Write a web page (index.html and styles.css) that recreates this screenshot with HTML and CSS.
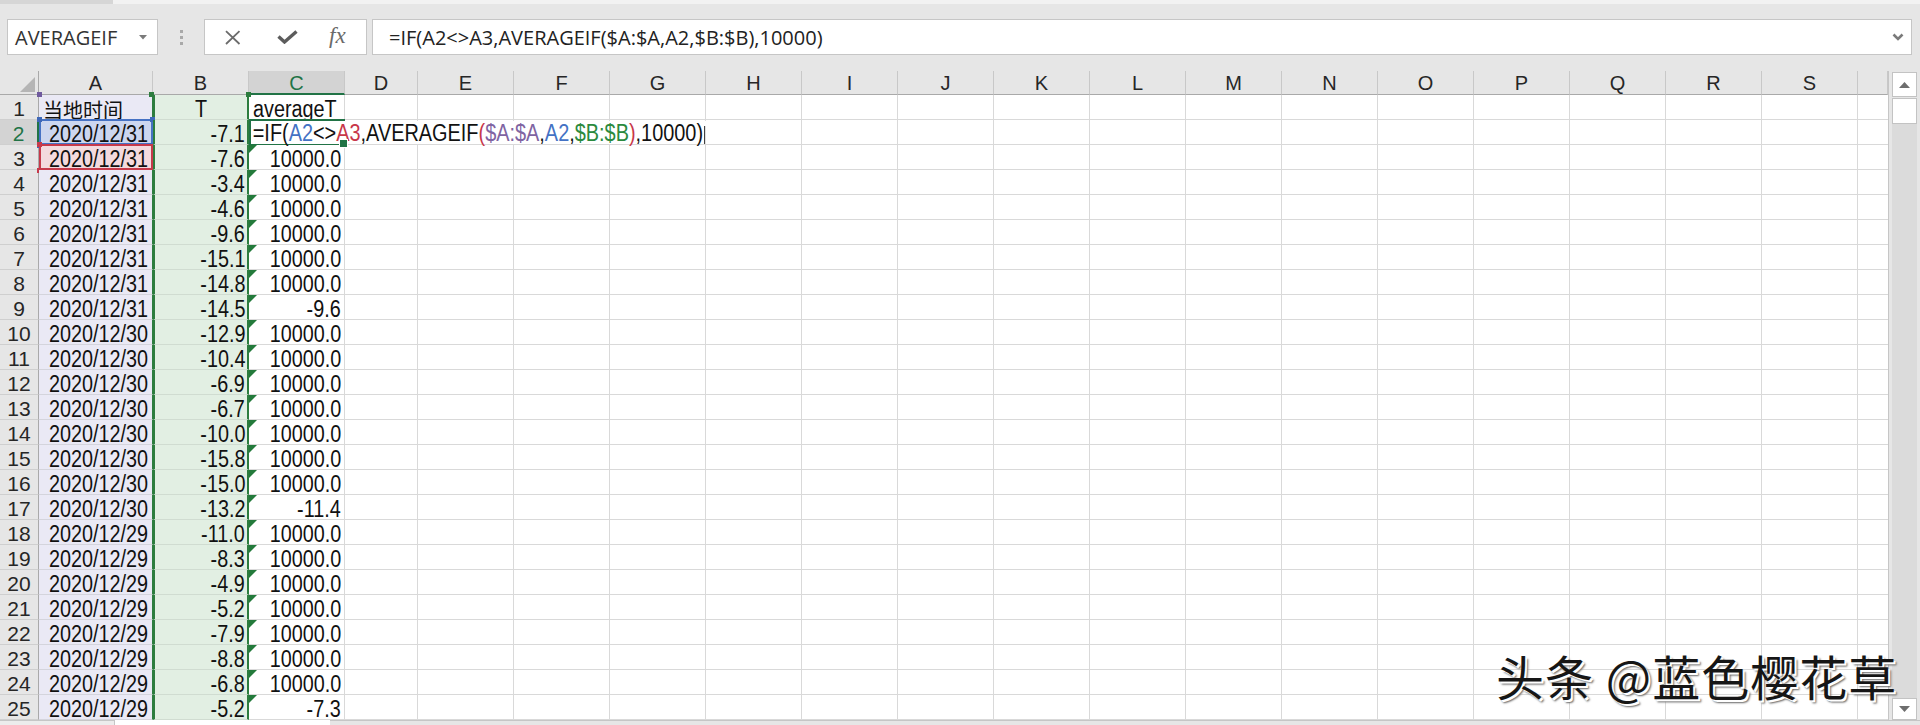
FILE: index.html
```html
<!DOCTYPE html>
<html lang="zh">
<head>
<meta charset="utf-8">
<title>Excel - AVERAGEIF</title>
<link rel="stylesheet" href="styles.css">
</head>
<body>
<div class="topstrip"><div class="ts-l"></div><div class="ts-r"></div></div>

<div class="toolbar">
  <div class="namebox">
    <span>AVERAGEIF</span>
    <svg class="caret" width="8" height="5" viewBox="0 0 8 5"><path d="M0 0H8L4 4.5Z" fill="#7a7a7a"/></svg>
  </div>
  <div class="sep"><i></i><i></i><i></i></div>
  <div class="fbtns">
    <svg class="ic-x" width="19" height="15" viewBox="0 0 19 15"><path d="M3 1.2L16.5 14M16.5 1.2L3 14" stroke="#6b6b6b" stroke-width="1.8" fill="none"/></svg>
    <svg class="ic-ok" width="21" height="14" viewBox="0 0 21 14"><path d="M1.5 6.5L7.5 12L19.5 1.5" stroke="#5c5c5c" stroke-width="3.4" fill="none"/></svg>
    <span class="fx">fx</span>
  </div>
  <div class="fbar">
    <span class="ftext">=IF(A2&lt;&gt;A3,AVERAGEIF($A:$A,A2,$B:$B),10000)</span>
    <svg class="chev" width="12" height="8" viewBox="0 0 12 8"><path d="M1.5 1.5L6 6L10.5 1.5" stroke="#7a7a7a" stroke-width="2.6" fill="none"/></svg>
  </div>
</div>

<div class="sheet">
  <div class="grid">
    <div class="h corner"></div>
    <div class="h">A</div><div class="h">B</div><div class="h sel">C</div><div class="h">D</div>
    <div class="h">E</div><div class="h">F</div><div class="h">G</div><div class="h">H</div>
    <div class="h">I</div><div class="h">J</div><div class="h">K</div><div class="h">L</div>
    <div class="h">M</div><div class="h">N</div><div class="h">O</div><div class="h">P</div>
    <div class="h">Q</div><div class="h">R</div><div class="h">S</div><div class="h"></div>

    <div class="blank"></div>

    <div class="rh">1</div>
    <div class="c a l first"><span class="cjk">当地时间</span></div>
    <div class="c b m"><span>T</span></div>
    <div class="c cc l"><span>averageT</span></div>

    <div class="rh sel">2</div>
    <div class="c a r ref-blue"><span>2020/12/31</span></div>
    <div class="c b r"><span>-7.1</span></div>
    <div class="c cc active">
      <div class="editor">=IF(<em class="k-blue">A2</em>&lt;&gt;<em class="k-red">A3</em>,AVERAGEIF<em class="k-red">(</em><em class="k-purple">$A:$A</em>,<em class="k-blue">A2</em>,<em class="k-green">$B:$B</em><em class="k-red">)</em>,10000)<i class="cursor"></i></div>
    </div>

    <div class="rh">3</div>
    <div class="c a r ref-red"><span>2020/12/31</span></div>
    <div class="c b r"><span>-7.6</span></div>
    <div class="c cc r tri"><span>10000.0</span></div>

    <div class="rh">4</div>
    <div class="c a r"><span>2020/12/31</span></div>
    <div class="c b r"><span>-3.4</span></div>
    <div class="c cc r tri"><span>10000.0</span></div>

    <div class="rh">5</div>
    <div class="c a r"><span>2020/12/31</span></div>
    <div class="c b r"><span>-4.6</span></div>
    <div class="c cc r tri"><span>10000.0</span></div>

    <div class="rh">6</div>
    <div class="c a r"><span>2020/12/31</span></div>
    <div class="c b r"><span>-9.6</span></div>
    <div class="c cc r tri"><span>10000.0</span></div>

    <div class="rh">7</div>
    <div class="c a r"><span>2020/12/31</span></div>
    <div class="c b r"><span>-15.1</span></div>
    <div class="c cc r tri"><span>10000.0</span></div>

    <div class="rh">8</div>
    <div class="c a r"><span>2020/12/31</span></div>
    <div class="c b r"><span>-14.8</span></div>
    <div class="c cc r tri"><span>10000.0</span></div>

    <div class="rh">9</div>
    <div class="c a r"><span>2020/12/31</span></div>
    <div class="c b r"><span>-14.5</span></div>
    <div class="c cc r tri"><span>-9.6</span></div>

    <div class="rh">10</div>
    <div class="c a r"><span>2020/12/30</span></div>
    <div class="c b r"><span>-12.9</span></div>
    <div class="c cc r tri"><span>10000.0</span></div>

    <div class="rh">11</div>
    <div class="c a r"><span>2020/12/30</span></div>
    <div class="c b r"><span>-10.4</span></div>
    <div class="c cc r tri"><span>10000.0</span></div>

    <div class="rh">12</div>
    <div class="c a r"><span>2020/12/30</span></div>
    <div class="c b r"><span>-6.9</span></div>
    <div class="c cc r tri"><span>10000.0</span></div>

    <div class="rh">13</div>
    <div class="c a r"><span>2020/12/30</span></div>
    <div class="c b r"><span>-6.7</span></div>
    <div class="c cc r tri"><span>10000.0</span></div>

    <div class="rh">14</div>
    <div class="c a r"><span>2020/12/30</span></div>
    <div class="c b r"><span>-10.0</span></div>
    <div class="c cc r tri"><span>10000.0</span></div>

    <div class="rh">15</div>
    <div class="c a r"><span>2020/12/30</span></div>
    <div class="c b r"><span>-15.8</span></div>
    <div class="c cc r tri"><span>10000.0</span></div>

    <div class="rh">16</div>
    <div class="c a r"><span>2020/12/30</span></div>
    <div class="c b r"><span>-15.0</span></div>
    <div class="c cc r tri"><span>10000.0</span></div>

    <div class="rh">17</div>
    <div class="c a r"><span>2020/12/30</span></div>
    <div class="c b r"><span>-13.2</span></div>
    <div class="c cc r tri"><span>-11.4</span></div>

    <div class="rh">18</div>
    <div class="c a r"><span>2020/12/29</span></div>
    <div class="c b r"><span>-11.0</span></div>
    <div class="c cc r tri"><span>10000.0</span></div>

    <div class="rh">19</div>
    <div class="c a r"><span>2020/12/29</span></div>
    <div class="c b r"><span>-8.3</span></div>
    <div class="c cc r tri"><span>10000.0</span></div>

    <div class="rh">20</div>
    <div class="c a r"><span>2020/12/29</span></div>
    <div class="c b r"><span>-4.9</span></div>
    <div class="c cc r tri"><span>10000.0</span></div>

    <div class="rh">21</div>
    <div class="c a r"><span>2020/12/29</span></div>
    <div class="c b r"><span>-5.2</span></div>
    <div class="c cc r tri"><span>10000.0</span></div>

    <div class="rh">22</div>
    <div class="c a r"><span>2020/12/29</span></div>
    <div class="c b r"><span>-7.9</span></div>
    <div class="c cc r tri"><span>10000.0</span></div>

    <div class="rh">23</div>
    <div class="c a r"><span>2020/12/29</span></div>
    <div class="c b r"><span>-8.8</span></div>
    <div class="c cc r tri"><span>10000.0</span></div>

    <div class="rh">24</div>
    <div class="c a r"><span>2020/12/29</span></div>
    <div class="c b r"><span>-6.8</span></div>
    <div class="c cc r tri"><span>10000.0</span></div>

    <div class="rh">25</div>
    <div class="c a r"><span>2020/12/29</span></div>
    <div class="c b r"><span>-5.2</span></div>
    <div class="c cc r tri"><span>-7.3</span></div>
  </div>

  <div class="vscroll">
    <div class="sb-btn up"><svg width="11" height="6" viewBox="0 0 11 6"><path d="M0 6H11L5.5 0Z" fill="#6e6e6e"/></svg></div>
    <div class="sb-thumb"></div>
    <div class="sb-track"></div>
    <div class="sb-btn down"><svg width="11" height="6" viewBox="0 0 11 6"><path d="M0 0H11L5.5 6Z" fill="#6e6e6e"/></svg></div>
  </div>
</div>

<div class="bottom"><div class="bt-1"></div><div class="bt-2"></div><div class="bt-3"></div></div>

<div class="wm">头条 @蓝色樱花草</div>
</body>
</html>
```

FILE: styles.css
```css
* { box-sizing: border-box; }

body {
  margin: 0;
  width: 1920px;
  height: 725px;
  overflow: hidden;
  position: relative;
  background: #e6e6e6;
  font-family: "Liberation Sans", Arial, sans-serif;
  color: #1a1a1a;
}

/* ---------- top strip ---------- */
.topstrip { display: flex; height: 4px; }
.ts-l { width: 113px; background: #d6d6d6; }
.ts-r { flex: 1; background: #f2f2f2; }

/* ---------- formula toolbar ---------- */
.toolbar {
  display: flex;
  height: 36px;
  margin: 15px 8px 16px 7px;
}
.namebox {
  width: 151px;
  background: #fff;
  border: 1px solid #c6c6c6;
  display: flex;
  align-items: center;
  justify-content: space-between;
  padding: 0 10px 0 7px;
  font-family: "Open Sans", "Noto Sans", sans-serif;
  font-size: 20px;
  color: #333;
}
.sep {
  width: 46px;
  display: flex;
  flex-direction: column;
  align-items: center;
  justify-content: center;
  gap: 3px;
}
.sep i { display: block; width: 3px; height: 3px; background: #a9a9a9; }

.fbtns {
  width: 163px;
  background: #fff;
  border: 1px solid #c6c6c6;
  display: flex;
  align-items: center;
  padding-left: 18px;
}
.ic-ok { margin-left: 35px; }
.fx {
  margin-left: 31px;
  font-family: "Liberation Serif", "Times New Roman", serif;
  font-style: italic;
  font-size: 23px;
  color: #6a6a6a;
  position: relative;
  top: -1px;
}
.fbar {
  flex: 1;
  margin-left: 5px;
  background: #fff;
  border: 1px solid #c6c6c6;
  display: flex;
  align-items: center;
  padding: 0 7px 0 16px;
  font-family: "Open Sans", "Noto Sans", sans-serif;
  font-size: 20px;
  color: #222;
}
.chev { margin-left: auto; }

/* ---------- sheet ---------- */
.sheet { display: flex; height: 649px; }

.grid {
  width: 1889px;
  display: grid;
  grid-template-columns: 39px 114px 96px 96px 73px repeat(15, 96px) 30px;
  grid-template-rows: 24px repeat(25, 25px);
  background: #fff;
  border-right: 1px solid #c6c6c6;
}

/* column headers */
.h {
  background: #e6e6e6;
  border-right: 1px solid #c8c8c8;
  border-bottom: 1px solid #a9a9a9;
  text-align: center;
  font-size: 20px;
  line-height: 22px;
  padding-top: 1px;
  color: #262626;
}
.h.sel {
  background: #d3d3d3;
  color: #217346;
  border-bottom: 2px solid #217346;
}
.corner { position: relative; border-right-color: #a9a9a9; }
.corner::after {
  content: "";
  position: absolute;
  right: 3px;
  bottom: 2px;
  border-left: 15px solid transparent;
  border-bottom: 15px solid #b5b5b5;
}

/* empty grid area D..T */
.blank {
  grid-column: 5 / -1;
  grid-row: 2 / -1;
  background-color: #fff;
  background-image:
    linear-gradient(to right, transparent 95px, #d9d9d9 95px),
    linear-gradient(to bottom, transparent 24px, #d9d9d9 24px);
  background-size: 96px 100%, 100% 25px;
  background-position: -23px 0, 0 0;
}

/* row headers */
.rh {
  background: #e6e6e6;
  border-right: 1px solid #a9a9a9;
  border-bottom: 1px solid #cfcfcf;
  text-align: center;
  font-size: 21px;
  line-height: 23px;
  padding-top: 2px;
  color: #262626;
}
.rh.sel {
  background: #d3d3d3;
  color: #217346;
  border-right: 2px solid #217346;
}

/* data cells */
.c {
  position: relative;
  display: flex;
  align-items: flex-start;
  border-right: 1px solid #d9d9d9;
  border-bottom: 1px solid #d9d9d9;
  font-size: 23px;
  line-height: 24px;
  padding-top: 2px;
  white-space: nowrap;
  color: #111;
}
.c > span { display: block; flex: none; transform: scaleX(.86); }
.c.r { justify-content: flex-end; padding-right: 3px; }
.c.r > span { transform-origin: 100% 50%; }
.c.l { justify-content: flex-start; padding-left: 4px; }
.c.l > span { transform-origin: 0 50%; }
.c.m { justify-content: center; }
.c.m > span { transform-origin: 50% 50%; }

.c > span.cjk {
  font-family: "Noto Sans CJK SC", "Liberation Sans", sans-serif;
  font-size: 20px;
  line-height: 23px;
  padding-top: 1px;
  transform: none;
}

/* column A: $A:$A range (purple) */
.c.a {
  background: #eae9f5;
  border-right: 1px solid #2d7d3f;
  border-bottom-color: #d4d4dc;
}
.c.a.r { padding-right: 4px; }

/* column B: $B:$B range (green) */
.c.b {
  background: #e2efe3;
  border-left: 2px solid #2d7d3f;
  border-right: 2px solid #2d7d3f;
  border-bottom-color: #d0dcd1;
}
.c.b.r { padding-right: 2px; }

/* corner handles of the column ranges */
.c.first::before,
.c.b.m::before {
  content: "";
  position: absolute;
  top: -3px;
  width: 5px;
  height: 5px;
}
.c.first::before { left: -2px; background: #6f5a9e; box-shadow: 112px 0 #2d7d3f; }
.c.b.m::before { right: -4px; background: #2d7d3f; }

/* A2: blue reference, A3: red reference */
.ref-blue { background: #ccd6ef !important; }
.ref-red { background: #f3dade !important; }
.ref-blue::before,
.ref-red::before {
  content: "";
  position: absolute;
  left: 0; top: -1px; right: -1px; bottom: -1px;
  border: 2px solid;
}
.ref-blue::before { border-color: #4672c4; }
.ref-red::before { border-color: #c63a4b; }
.ref-blue::after,
.ref-red::after {
  content: "";
  position: absolute;
  left: -2px;
  top: -3px;
  width: 5px;
  height: 5px;
}
.ref-blue::after { background: #3f68b8; box-shadow: 113px 0 #3f68b8, 0 26px #3f68b8, 113px 26px #3f68b8; }
.ref-red::after { background: #c63a4b; box-shadow: 0 26px #c63a4b, 113px 26px #c63a4b; }

/* error indicator triangles */
.tri::before {
  content: "";
  position: absolute;
  left: 0;
  top: 0;
  border-top: 8px solid #237a3b;
  border-right: 8px solid transparent;
}

/* active cell C2 with in-cell editor */
.active { overflow: visible; }
.active::before {
  content: "";
  position: absolute;
  left: 0; top: -1px; right: -1px; bottom: -1px;
  border: 2px solid #217346;
}
.editor {
  position: absolute;
  left: 2px;
  top: 1px;
  height: 23px;
  padding: 1px 2px 0 2px;
  line-height: 22px;
  background: #fff;
  white-space: nowrap;
  transform: scaleX(.865);
  transform-origin: 0 50%;
  z-index: 2;
}
.editor em { font-style: normal; }
.k-blue { color: #4472c4; }
.k-red { color: #c8374a; }
.k-purple { color: #8064a2; }
.k-green { color: #2b8a3e; }
.cursor {
  display: inline-block;
  width: 1.3px;
  height: 18px;
  margin-left: 1px;
  vertical-align: -3px;
  background: #000;
}
.active::after {
  content: "";
  position: absolute;
  right: -4px;
  bottom: -4px;
  width: 7px;
  height: 7px;
  background: #217346;
  border: 1px solid #fff;
  z-index: 3;
}

/* ---------- vertical scrollbar ---------- */
.vscroll {
  width: 31px;
  display: flex;
  flex-direction: column;
  padding: 1px 0 0 3px;
}
.sb-btn {
  width: 25px;
  background: #fff;
  border: 1px solid #c3c3c3;
  display: flex;
  align-items: center;
  justify-content: center;
}
.sb-btn.up { height: 25px; }
.sb-btn.down { height: 22px; }
.sb-thumb {
  width: 25px;
  height: 26px;
  margin-top: 1px;
  background: #fff;
  border: 1px solid #c3c3c3;
}
.sb-track { width: 25px; flex: 1; background: #dbdbdb; }

/* ---------- bottom strip ---------- */
.bottom { display: flex; height: 5px; }
.bt-1 { width: 115px; background: #ececec; border-top: 1px solid #c6c6c6; border-right: 1px solid #c6c6c6; }
.bt-2 { width: 215px; background: #fff; }
.bt-3 { flex: 1; background: #e6e6e6; border-top: 1px solid #c6c6c6; }

/* ---------- watermark ---------- */
.wm {
  position: absolute;
  left: 1496px;
  top: 651px;
  font-family: "Noto Sans CJK SC", sans-serif;
  font-size: 48px;
  line-height: 48px;
  letter-spacing: 1px;
  white-space: nowrap;
  color: #161616;
  text-shadow: 2px 2px 0 #fff, 3px 3px 2px #666;
}
```
